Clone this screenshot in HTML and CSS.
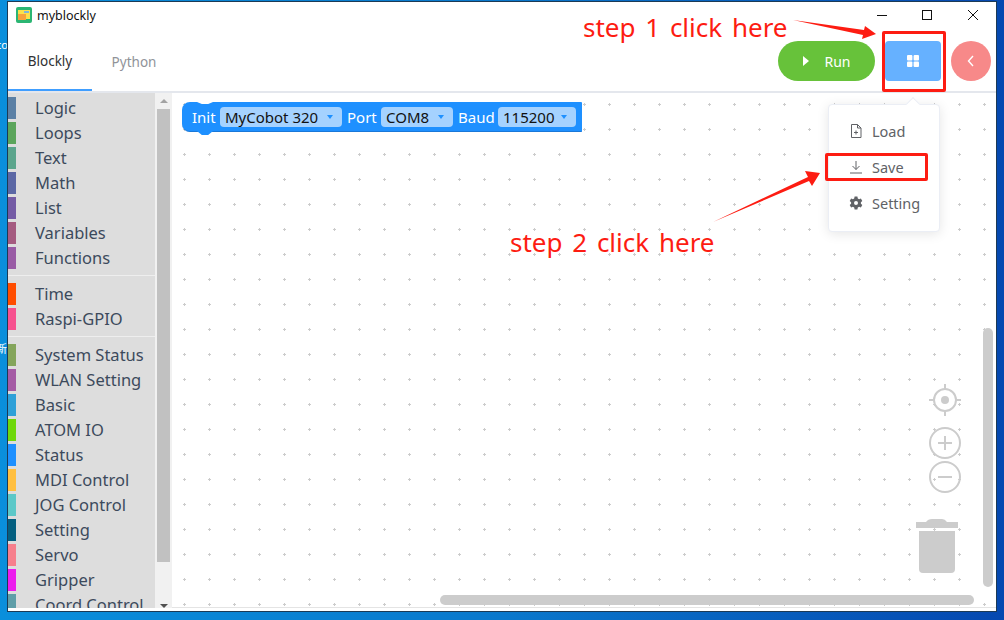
FILE: index.html
```html
<!DOCTYPE html>
<html lang="en">
<head>
    <meta charset="UTF-8">
    <meta name="viewport" content="width=device-width, initial-scale=1.0">
    <title>myblockly</title>
    <link rel="stylesheet" href="styles.css">
</head>
<body>
    <!-- desktop icon labels that peek out from behind the window -->
    <span class="desk-label desk-label-1">co</span>
    <span class="desk-label desk-label-2">新</span>

    <div class="window">
        <div class="titlebar">
            <svg class="app-icon" width="16" height="16" viewBox="0 0 16 16">
                <rect width="16" height="16" rx="2" fill="#2bb673"/>
                <rect x="2" y="3" width="12" height="9" fill="#fbe14b"/>
                <rect x="2" y="7" width="8" height="6" fill="#f7a23b"/>
                <rect x="8" y="4" width="5" height="2" fill="#7fb6d8"/>
            </svg>
            <span class="app-name">myblockly</span>
            <div class="win-controls">
                <svg width="46" height="30" viewBox="0 0 46 30"><path d="M19 15.500h10" stroke="#111" fill="none"/></svg>
                <svg width="46" height="30" viewBox="0 0 46 30"><rect x="18.500" y="10.500" width="9" height="9" stroke="#111" fill="none"/></svg>
                <svg width="46" height="30" viewBox="0 0 46 30"><path d="M18 10l10 10M28 10l-10 10" stroke="#111" fill="none"/></svg>
            </div>
        </div>

        <div class="toolbar">
            <div class="tabs">
                <div class="tab active">Blockly</div>
                <div class="tab">Python</div>
            </div>
            <div class="actions">
                <button class="btn-run">
                    <svg width="8" height="10" viewBox="0 0 8 10"><path d="M1 0l6 5-6 5z" fill="#fff"/></svg>
                    Run
                </button>
                <button class="btn-menu">
                    <svg width="12" height="12" viewBox="0 0 12 12" fill="#fff">
                        <rect width="5.400" height="5.400" rx="1"/>
                        <rect x="6.600" width="5.400" height="5.400" rx="1"/>
                        <rect y="6.600" width="5.400" height="5.400" rx="1"/>
                        <rect x="6.600" y="6.600" width="5.400" height="5.400" rx="1"/>
                    </svg>
                </button>
                <button class="btn-back">
                    <svg width="8" height="12" viewBox="0 0 8 12"><path d="M6 1L1.500 6 6 11" stroke="#fff" stroke-width="1.400" fill="none"/></svg>
                </button>
            </div>
        </div>

        <div class="main">
            <div class="toolbox">
                <div class="categories">
                    <div class="cat"><i class="swatch c-logic"></i>Logic</div>
                    <div class="cat"><i class="swatch c-loops"></i>Loops</div>
                    <div class="cat"><i class="swatch c-text"></i>Text</div>
                    <div class="cat"><i class="swatch c-math"></i>Math</div>
                    <div class="cat"><i class="swatch c-list"></i>List</div>
                    <div class="cat"><i class="swatch c-vars"></i>Variables</div>
                    <div class="cat"><i class="swatch c-funcs"></i>Functions</div>
                    <div class="sep"></div>
                    <div class="cat"><i class="swatch c-time"></i>Time</div>
                    <div class="cat"><i class="swatch c-gpio"></i>Raspi-GPIO</div>
                    <div class="sep"></div>
                    <div class="cat"><i class="swatch c-status"></i>System Status</div>
                    <div class="cat"><i class="swatch c-wlan"></i>WLAN Setting</div>
                    <div class="cat"><i class="swatch c-basic"></i>Basic</div>
                    <div class="cat"><i class="swatch c-atom"></i>ATOM IO</div>
                    <div class="cat"><i class="swatch c-stat2"></i>Status</div>
                    <div class="cat"><i class="swatch c-mdi"></i>MDI Control</div>
                    <div class="cat"><i class="swatch c-jog"></i>JOG Control</div>
                    <div class="cat"><i class="swatch c-setting"></i>Setting</div>
                    <div class="cat"><i class="swatch c-servo"></i>Servo</div>
                    <div class="cat"><i class="swatch c-gripper"></i>Gripper</div>
                    <div class="cat"><i class="swatch c-coord"></i>Coord Control</div>
                </div>
                <div class="toolbox-scroll">
                    <i class="arrow-up"></i>
                    <div class="toolbox-thumb"></div>
                    <i class="arrow-down"></i>
                </div>
            </div>

            <div class="workspace">
                <svg class="grid" width="100%" height="100%">
                    <defs>
                        <pattern id="dots" x="0" y="0" width="25" height="25" patternUnits="userSpaceOnUse">
                            <path d="M11 11.500h3M12.500 10v3" stroke="#ccc" fill="none"/>
                        </pattern>
                    </defs>
                    <rect width="100%" height="100%" fill="url(#dots)"/>
                </svg>

                <div class="block">
                    <span class="block-label label-init">Init</span>
                    <span class="field field-robot">MyCobot 320<i class="caret"></i></span>
                    <span class="block-label label-port">Port</span>
                    <span class="field field-port">COM8<i class="caret"></i></span>
                    <span class="block-label label-baud">Baud</span>
                    <span class="field field-baud">115200<i class="caret"></i></span>
                </div>

                <div class="dropdown">
                    <div class="dropdown-arrow"></div>
                    <div class="dropdown-item">
                        <svg width="14" height="14" viewBox="0 0 14 14" fill="none" stroke="#606266">
                            <path d="M2.500.5h6l3.500 3.500v9.500h-9.500z"/>
                            <path d="M8.500.5v3.500H12M5 8.500h4M7 6.500v4"/>
                        </svg>
                        Load
                    </div>
                    <div class="dropdown-item">
                        <svg width="14" height="14" viewBox="0 0 14 14" fill="none" stroke="#606266">
                            <path d="M7 1v8.500M3.500 6L7 9.500 10.500 6M1 13h12"/>
                        </svg>
                        Save
                    </div>
                    <div class="dropdown-item">
                        <svg width="14" height="14" viewBox="0 0 14 14">
                            <path fill="#606266" fill-rule="evenodd" d="M5.600.6h2.800l.4 1.900 1.300.7 1.800-.7 1.400 2.400-1.400 1.300v1.600l1.400 1.300-1.400 2.400-1.800-.7-1.300.7-.4 1.900H5.600l-.4-1.900-1.300-.7-1.800.7L.7 9.100l1.400-1.300V6.200L.7 4.900l1.400-2.400 1.800.7 1.300-.7zM7 5a2 2 0 100 4 2 2 0 000-4z"/>
                        </svg>
                        Setting
                    </div>
                </div>

                <div class="ws-controls">
                    <svg class="ctl-center" width="32" height="32" viewBox="0 0 32 32" fill="none" stroke="#ccc" stroke-width="2">
                        <circle cx="16" cy="16" r="11"/>
                        <circle cx="16" cy="16" r="4" fill="#ccc" stroke="none"/>
                        <path d="M16 0v5M16 27v5M0 16h5M27 16h5"/>
                    </svg>
                    <svg class="ctl-zoom" width="32" height="32" viewBox="0 0 32 32" fill="none" stroke="#ccc" stroke-width="2">
                        <circle cx="16" cy="16" r="15"/>
                        <path d="M16 9v14M9 16h14"/>
                    </svg>
                    <svg class="ctl-zoom" width="32" height="32" viewBox="0 0 32 32" fill="none" stroke="#ccc" stroke-width="2">
                        <circle cx="16" cy="16" r="15"/>
                        <path d="M9 16h14"/>
                    </svg>
                    <svg class="ctl-trash" width="42" height="54" viewBox="0 0 42 54" fill="#ccc">
                        <path d="M0 3h10q2-3 6-3h10q3 0 5 3h11v6H0z"/>
                        <path d="M3 12h36v38a4 4 0 01-4 4H7a4 4 0 01-4-4z"/>
                    </svg>
                </div>

                <div class="ws-scroll-v"></div>
                <div class="ws-scroll-h"></div>
            </div>
        </div>
    </div>

    <!-- annotations drawn over the screenshot -->
    <div class="note note-1">step 1 click here</div>
    <div class="note note-2">step 2 click here</div>
    <div class="mark mark-menu"></div>
    <div class="mark mark-save"></div>
    <svg class="arrows" width="1004" height="620" viewBox="0 0 1004 620" fill="#fd1c12">
        <path d="M793 20L864 30 865 26 876 34 862 39 863 35z"/>
        <path d="M713 222L808 177 805 171 820 173 812 186 809 181z"/>
    </svg>
</body>
</html>
```

FILE: styles.css
```css
* {
    box-sizing: border-box;
}

html, body {
    height: 100%;
}

body {
    margin: 0;
    padding: 1px 7px 7px 7px;
    overflow: hidden;
    background: linear-gradient(90deg, #0a8fdc 0%, #0a78cc 50%, #0548b0 100%);
    font-family: "Noto Sans", "Open Sans", "Noto Sans CJK SC", sans-serif;
}

.desk-label {
    position: absolute;
    left: -4px;
    font-size: 11px;
    line-height: 12px;
    color: #fff;
}

.desk-label-1 {
    top: 39px;
}

.desk-label-2 {
    top: 343px;
}

.window {
    position: relative;
    width: 990px;
    height: 611px;
    display: flex;
    flex-direction: column;
    padding-bottom: 3px;
    background: #fff;
    border: 1px solid #1c3a55;
}

.titlebar {
    height: 30px;
    flex: none;
    display: flex;
    align-items: center;
    padding: 0 0 4px 8px;
}

.app-name {
    margin-left: 5px;
    font-size: 12.5px;
    color: #111;
}

.win-controls {
    margin-left: auto;
    display: flex;
}

.toolbar {
    height: 61px;
    flex: none;
    display: flex;
    justify-content: space-between;
    border-bottom: 2px solid #e4e7ed;
}

.tabs {
    display: flex;
}

.tab {
    width: 84px;
    height: 59px;
    display: flex;
    align-items: center;
    justify-content: center;
    font-size: 13.5px;
    color: #909399;
}

.tab.active {
    color: #303133;
    border-bottom: 2px solid #409eff;
}

.actions {
    display: flex;
    align-items: flex-start;
    padding-top: 9px;
}

.actions button {
    height: 40px;
    border: none;
    display: flex;
    align-items: center;
    justify-content: center;
    font-family: inherit;
}

.btn-run {
    width: 97px;
    gap: 14px;
    border-radius: 20px;
    background: #67c23a;
    color: #fff;
    font-size: 14px;
}

.btn-menu {
    width: 56px;
    margin-left: 10px;
    border-radius: 4px;
    background: #66b1ff;
}

.btn-back {
    width: 40px;
    margin-left: 10px;
    margin-right: 5px;
    border-radius: 50%;
    background: #f78989;
}

.main {
    flex: 1;
    min-height: 0;
    display: flex;
}

.toolbox {
    width: 164px;
    flex: none;
    display: flex;
}

.categories {
    width: 147px;
    flex: none;
    padding-top: 2px;
    overflow: hidden;
    background: #ddd;
}

.cat {
    height: 25px;
    display: flex;
    align-items: center;
    font-size: 16.5px;
    color: #3c4a5c;
    white-space: nowrap;
}

.swatch {
    width: 8px;
    height: 22px;
    margin-right: 19px;
    flex: none;
}

.c-logic { background: #5b80a5; }
.c-loops { background: #5ba55b; }
.c-text { background: #5ba58c; }
.c-math { background: #5b67a5; }
.c-list { background: #745ba5; }
.c-vars { background: #a55b80; }
.c-funcs { background: #995ba5; }
.c-time { background: #ff4d00; }
.c-gpio { background: #f6518f; }
.c-status { background: #84a55b; }
.c-wlan { background: #a55ba5; }
.c-basic { background: #2ea0d8; }
.c-atom { background: #6fd80a; }
.c-stat2 { background: #1e90ff; }
.c-mdi { background: #ffbf40; }
.c-jog { background: #5cc8c8; }
.c-setting { background: #045f80; }
.c-servo { background: #f67f8c; }
.c-gripper { background: #ec1ced; }
.c-coord { background: #5f9ea8; }

.sep {
    height: 1px;
    margin: 5px 0;
    background: #eee;
}

.toolbox-scroll {
    position: relative;
    width: 17px;
    flex: none;
    padding: 16px 2px;
    background: #f1f1f1;
}

.toolbox-thumb {
    height: 453px;
    background: #c1c1c1;
}

.arrow-up,
.arrow-down {
    position: absolute;
    left: 5px;
    width: 0;
    height: 0;
    border-left: 4px solid transparent;
    border-right: 4px solid transparent;
}

.arrow-up {
    top: 6px;
    border-bottom: 4px solid #a3a3a3;
}

.arrow-down {
    bottom: 0;
    border-top: 4px solid #505050;
}

.workspace {
    position: relative;
    flex: 1;
    min-width: 0;
    overflow: hidden;
    border-bottom: 1px solid #e4e4e4;
}

.grid {
    position: absolute;
    top: 0;
    left: 0;
}

.block {
    position: absolute;
    top: 9px;
    left: 10px;
    width: 400px;
    height: 30px;
    display: flex;
    align-items: center;
    gap: 5px;
    padding: 0 6px 0 10px;
    border-radius: 8px 1px 1px 8px;
    background: #1e90ff;
    border-bottom: 1px solid #1a78d8;
    font-size: 15px;
}

.block::before {
    content: "";
    position: absolute;
    top: 0;
    left: 15px;
    width: 16px;
    height: 2px;
    background: #fff;
    clip-path: polygon(0 0, 100% 0, 70% 100%, 30% 100%);
}

.block::after {
    content: "";
    position: absolute;
    bottom: -4px;
    left: 15px;
    width: 16px;
    height: 4px;
    background: #1e90ff;
    clip-path: polygon(0 0, 100% 0, 70% 100%, 30% 100%);
}

.block-label {
    color: #fff;
    white-space: nowrap;
}

.label-init { width: 23px; }
.label-port { width: 29px; }
.label-baud { width: 35px; }

.field {
    height: 20px;
    display: flex;
    align-items: center;
    justify-content: space-between;
    padding: 0 9px 0 5px;
    border-radius: 4px;
    background: #a5d2ff;
    color: #111;
    white-space: nowrap;
}

.field-robot { width: 122px; }
.field-port { width: 72px; }
.field-baud { width: 78px; }

.caret {
    width: 0;
    height: 0;
    border-left: 3px solid transparent;
    border-right: 3px solid transparent;
    border-top: 4px solid #1e90ff;
}

.dropdown {
    position: absolute;
    top: 11px;
    left: 656px;
    width: 112px;
    height: 128px;
    padding: 8px 0;
    background: #fff;
    border: 1px solid #ebeef5;
    border-radius: 4px;
    box-shadow: 0 2px 12px rgba(0, 0, 0, 0.1);
}

.dropdown-arrow {
    position: absolute;
    top: -6px;
    left: 79px;
    width: 10px;
    height: 10px;
    background: #fff;
    transform: rotate(45deg);
    border-top: 1px solid #ebeef5;
    border-left: 1px solid #ebeef5;
}

.dropdown-item {
    height: 36px;
    display: flex;
    align-items: center;
    gap: 9px;
    padding-left: 20px;
    font-size: 14.5px;
    color: #606266;
}

.ws-controls {
    position: absolute;
    top: 291px;
    right: 30px;
    width: 42px;
    display: flex;
    flex-direction: column;
    align-items: center;
}

.ctl-zoom {
    margin-top: 2px;
}

.ctl-center {
    margin-bottom: 9px;
}

.ctl-trash {
    margin-top: 26px;
    margin-right: 16px;
    flex: none;
}

.ws-scroll-v {
    position: absolute;
    top: 235px;
    right: 3px;
    width: 10px;
    height: 259px;
    border-radius: 5px;
    background: #ccc;
}

.ws-scroll-h {
    position: absolute;
    bottom: 2px;
    left: 268px;
    width: 534px;
    height: 10px;
    border-radius: 5px;
    background: #ccc;
}

/* annotations */
.note {
    position: absolute;
    font-size: 26px;
    line-height: 36px;
    color: #fd1c12;
    word-spacing: 3px;
}

.note-1 {
    top: 9px;
    left: 583px;
}

.note-2 {
    top: 224px;
    left: 510px;
}

.mark {
    position: absolute;
    border: 3px solid #fd1c12;
    border-radius: 2px;
}

.mark-menu {
    top: 31px;
    left: 882px;
    width: 64px;
    height: 61px;
}

.mark-save {
    top: 153px;
    left: 825px;
    width: 103px;
    height: 28px;
}

.arrows {
    position: absolute;
    top: 0;
    left: 0;
    pointer-events: none;
}
```
